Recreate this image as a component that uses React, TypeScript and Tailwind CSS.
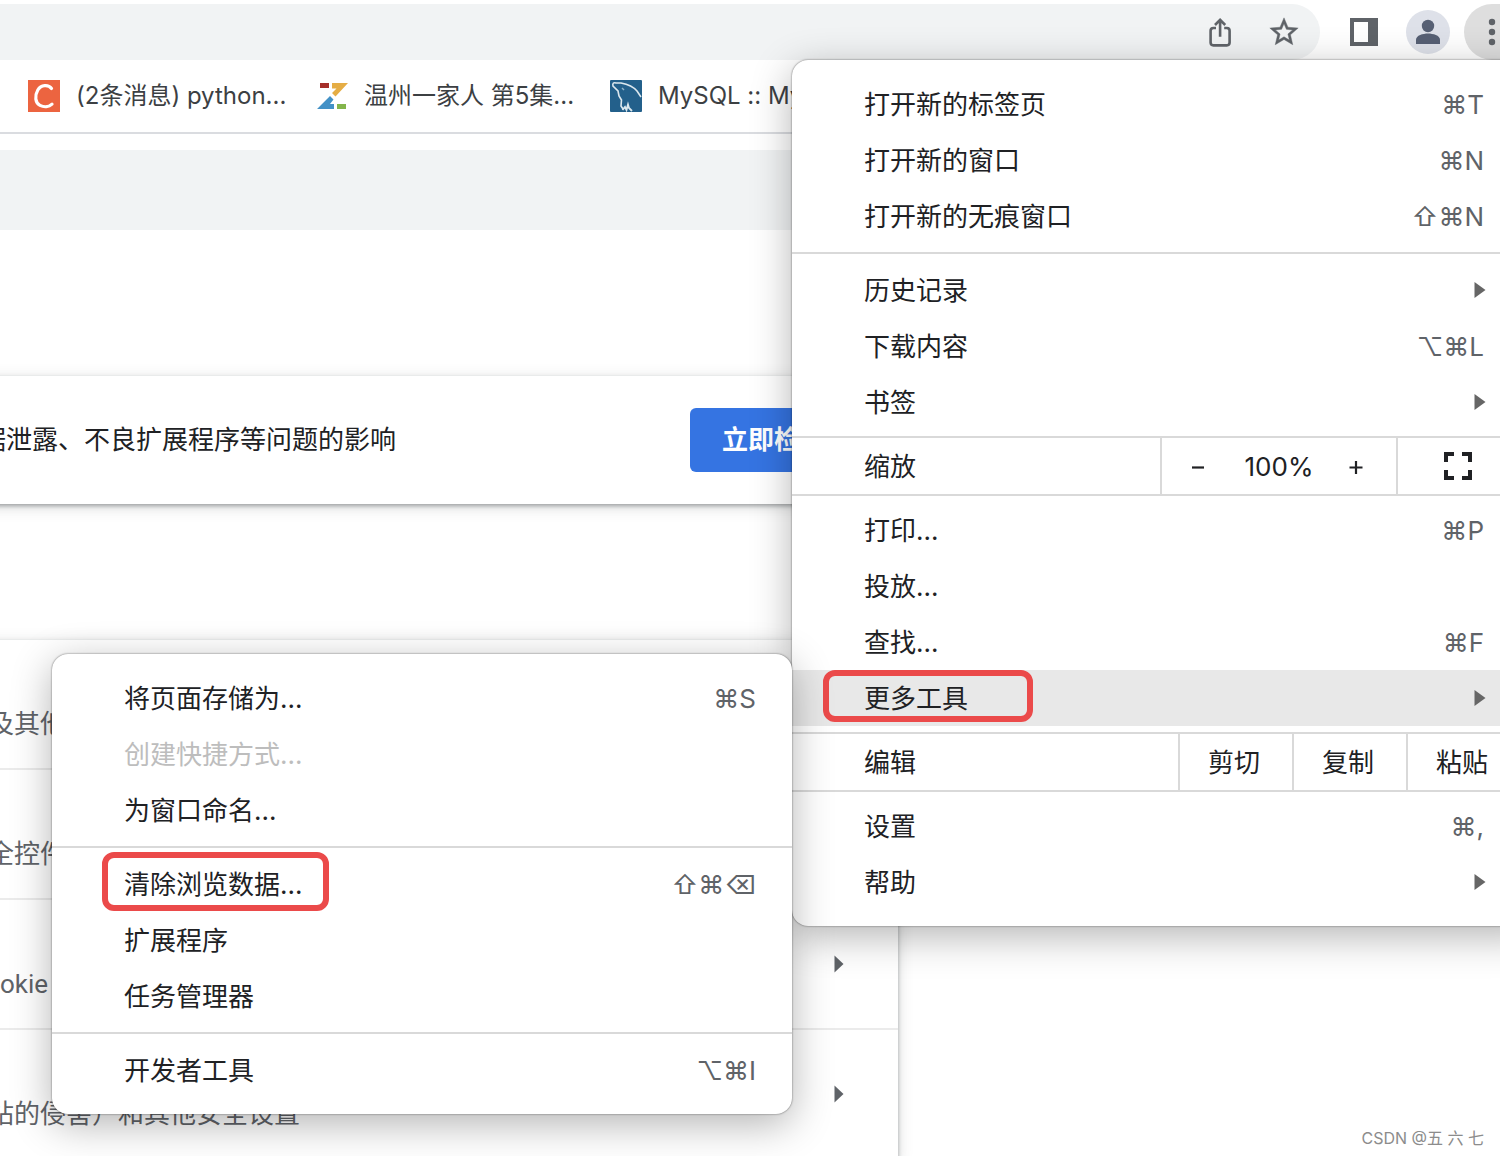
import type { ReactNode } from "react";

type MenuItemProps = {
  label: string;
  shortcut?: string;
  arrow?: boolean;
  disabled?: boolean;
  active?: boolean;
  inner?: boolean;
};

const Arrow = () => (
  <svg viewBox="0 0 12 16" className="w-3 h-4 shrink-0" aria-hidden="true">
    <path d="M0.5 0 L11.5 8 L0.5 16 Z" fill="#666666" />
  </svg>
);

const MenuItem = ({ label, shortcut, arrow, disabled, active, inner }: MenuItemProps) => {
  return (
    <button
      type="button"
      disabled={disabled}
      className={`flex w-full h-14 items-center justify-between pl-18 text-left ${inner ? "pr-9" : arrow ? "pr-[54px]" : "pr-14"} ${active ? "bg-[#e8e8e8]" : ""} ${disabled ? "text-[#bdbdbd]" : "text-[#202124]"}`}
    >
      <span className="pt-[2px]">{label}</span>
      {shortcut && (
        <span className="pt-[2px] text-[#5f6368] font-[Inter,'DejaVu_Sans',sans-serif]">{shortcut}</span>
      )}
      {arrow && <Arrow />}
    </button>
  );
};

const Separator = () => <hr className="my-2 border-0 h-[2px] bg-[#d9d9d9]" />;

const Menu = ({ children, className }: { children: ReactNode; className: string }) => (
  <div
    className={`bg-white py-4 text-[26px] leading-10 shadow-[0_0_2px_rgba(0,0,0,0.6),0_10px_40px_rgba(0,0,0,0.3)] ${className}`}
  >
    {children}
  </div>
);

const Toolbar = () => (
  <header className="flex h-15 pt-1 overflow-hidden">
    <div className="flex flex-1 items-center justify-end gap-8 bg-[#f1f3f4] rounded-r-full pr-5">
      <button type="button" aria-label="分享">
        <svg viewBox="0 0 32 32" className="w-8 h-8" fill="none" stroke="#5f6368" strokeWidth="2.6">
          <path d="M12 12 H9.4 Q6.6 12 6.6 14.8 V26.6 Q6.6 29.4 9.4 29.4 H22.8 Q25.6 29.4 25.6 26.6 V14.8 Q25.6 12 22.8 12 H20.2" />
          <path d="M16.1 20.7 V4.5 M11 9 L16.1 3.9 L21.2 9" />
        </svg>
      </button>
      <button type="button" aria-label="添加书签">
        <svg viewBox="0.7 0.7 22.6 22.6" className="w-8 h-8" fill="#5f6368" stroke="#5f6368" strokeWidth="0.3">
          <path d="M22 9.24l-7.19-.62L12 2 9.19 8.63 2 9.24l5.46 4.73L5.82 21 12 17.27 18.18 21l-1.63-7.03L22 9.24zM12 15.4l-3.76 2.27 1-4.28-3.32-2.88 4.38-.38L12 6.1l1.71 4.04 4.38.38-3.32 2.88 1 4.28L12 15.4z" />
        </svg>
      </button>
    </div>
    <div className="flex items-center pl-[30px]">
      <button type="button" aria-label="侧边栏">
        <svg viewBox="0 0 28 28" className="w-7 h-7">
          <rect width="28" height="28" fill="#5f6368" />
          <rect x="4" y="4" width="14" height="20" fill="#ffffff" />
        </svg>
      </button>
      <button type="button" aria-label="个人资料" className="ml-7 w-11 h-11 rounded-full bg-[#dee1e9]">
        <svg viewBox="0 0 44 44" className="w-11 h-11" fill="#576074">
          <circle cx="22" cy="16" r="6.2" />
          <path d="M10 34 V29.5 C10 25.4 17 23.4 22 23.4 S34 25.4 34 29.5 V34 Z" />
        </svg>
      </button>
      <button type="button" aria-label="更多" className="ml-[14px] w-9 h-14 rounded-l-full bg-[#dedede]">
        <svg viewBox="0 0 36 56" className="w-9 h-14" fill="#5f6368">
          <circle cx="28" cy="18" r="3.2" />
          <circle cx="28" cy="28" r="3.2" />
          <circle cx="28" cy="38" r="3.2" />
        </svg>
      </button>
    </div>
  </header>
);

const Bookmarks = () => (
  <nav className="flex h-[74px] items-center gap-8 pl-7 border-b-2 border-[#dadce0] text-2xl whitespace-nowrap text-[#3c4043] [font-feature-settings:'calt'_0]">
    <a href="#" className="flex w-64 items-center gap-4">
      <svg viewBox="0 0 32 32" className="w-8 h-8 shrink-0">
        <rect width="32" height="32" fill="#ec6440" />
        <path d="M23.5 8.5 C20.5 4.3 13 4.6 9.8 10 C6.4 16 7.2 23 12 25.4 C16 27.3 21 27 24 24.2" fill="none" stroke="#ffffff" strokeWidth="3.2" strokeLinecap="round" />
      </svg>
      <span>(2条消息) python...</span>
    </a>
    <a href="#" className="flex w-[262px] items-center gap-4">
      <svg viewBox="0 0 32 32" className="w-8 h-8 shrink-0">
        <rect x="4" y="3" width="9" height="5" fill="#a52f2a" />
        <path d="M16 3 H32 L19.5 16.5 L16 13 L20.5 8.5 H16 Z" fill="#e5ad45" />
        <path d="M1 29 L14 16 L17.5 19.5 L14 24 H18 V29 Z" fill="#4391c6" />
        <rect x="21" y="24" width="9" height="5" fill="#83b54b" />
      </svg>
      <span>温州一家人 第5集...</span>
    </a>
    <a href="#" className="flex items-center gap-4">
      <svg viewBox="0 0 32 32" className="w-8 h-8 shrink-0">
        <rect width="32" height="32" rx="1" fill="#23608b" />
        <path d="M13 29 L11 26 L11.5 20 L9 16 L8 11 L3 6 Q2 2 6 3 H11 Q22 5 27 11 L31 17" fill="none" stroke="#dbe7ee" strokeWidth="1.6" />
        <path d="M12.5 30 L15 27 L16.5 30 L18 24.5 L19 28 L22 31" fill="none" stroke="#dbe7ee" strokeWidth="1.8" />
        <path d="M12 8 L14 10" stroke="#8fb3c9" strokeWidth="1.4" />
      </svg>
      <span>MySQL :: MySQL</span>
    </a>
  </nav>
);

const SettingsRow = ({ text, indent }: { text: string; indent: string }) => (
  <a href="#" className={`flex h-[130px] items-center justify-between border-b-2 border-[#ebebeb] pr-[54px] ${indent}`}>
    <span className="pt-10 text-[#5f6368] whitespace-nowrap">{text}</span>
    <svg viewBox="0 0 10 18" className="w-[10px] h-[18px]" fill="#5f6368">
      <path d="M0.5 0.5 L9.5 9 L0.5 17.5 Z" />
    </svg>
  </a>
);

const SettingsPage = () => (
  <main className="-ml-8 w-[930px] text-[26px] leading-10 font-[Roboto,'Noto_Sans_CJK_SC',sans-serif]">
    <section className="mt-[146px] flex h-32 items-center justify-between pl-3 pr-10 bg-white shadow-[0_2px_4px_rgba(60,64,67,0.4),0_3px_14px_rgba(60,64,67,0.2)]">
      <p className="text-[#202124]">据泄露、不良扩展程序等问题的影响</p>
      <button type="button" className="h-16 px-8 rounded-md bg-[#3574e2] text-white font-bold">立即检查</button>
    </section>
    <section className="mt-[136px] bg-white shadow-[0_2px_4px_rgba(60,64,67,0.4),0_3px_14px_rgba(60,64,67,0.2)]">
      <SettingsRow text="及其他" indent="pl-5" />
      <SettingsRow text="全控件" indent="pl-5" />
      <SettingsRow text="okie" indent="pl-8" />
      <SettingsRow text="站的侵害）和其他安全设置" indent="pl-5" />
    </section>
  </main>
);

const ToolsMenu = () => (
  <Menu className="absolute right-full -top-4 w-[740px] rounded-2xl">
    <MenuItem inner label="将页面存储为..." shortcut="⌘S" />
    <MenuItem inner label="创建快捷方式..." disabled />
    <MenuItem inner label="为窗口命名..." />
    <Separator />
    <div className="relative">
      <MenuItem inner label="清除浏览数据..." shortcut="⇧⌘⌫" />
      <div className="absolute left-[50px] -top-1 w-[227px] h-[59px] rounded-xl border-6 border-[#eb4a4a] pointer-events-none" />
    </div>
    <MenuItem inner label="扩展程序" />
    <MenuItem inner label="任务管理器" />
    <Separator />
    <MenuItem inner label="开发者工具" shortcut="⌥⌘I" />
  </Menu>
);

// The menu runs past the right edge of the window, hence the extra 40px.
const ChromeMenu = () => (
  <Menu className="absolute -right-10 top-15 w-[748px] rounded-2xl">
    <MenuItem label="打开新的标签页" shortcut="⌘T" />
    <MenuItem label="打开新的窗口" shortcut="⌘N" />
    <MenuItem label="打开新的无痕窗口" shortcut="⇧⌘N" />
    <Separator />
    <MenuItem label="历史记录" arrow />
    <MenuItem label="下载内容" shortcut="⌥⌘L" />
    <MenuItem label="书签" arrow />

    <div className="my-[6px] flex h-15 items-stretch border-y-2 border-[#d9d9d9] text-[#202124]">
      <span className="flex flex-1 items-center pl-18 pt-[2px]">缩放</span>
      <div className="flex w-[238px] items-center border-x-2 border-[#d9d9d9] pl-7 pr-8">
        <button type="button" aria-label="缩小" className="w-4 h-10">
          <svg viewBox="0 0 16 16" className="w-4 h-4" stroke="#202124" strokeWidth="2.2">
            <path d="M2 9.5 H14" />
          </svg>
        </button>
        <span className="flex-1 pl-1 pt-[2px] text-center">100%</span>
        <button type="button" aria-label="放大" className="w-4 h-10">
          <svg viewBox="0 0 16 16" className="w-4 h-4" stroke="#202124" strokeWidth="2.2">
            <path d="M1.5 9.5 H14.5 M8 3 V16" />
          </svg>
        </button>
      </div>
      <button type="button" aria-label="全屏" className="w-[142px] pl-[46px]">
        <svg viewBox="0 0 28 28" className="w-7 h-7" fill="none" stroke="#202124" strokeWidth="4">
          <path d="M2 10 V2 H10 M18 2 H26 V10 M26 18 V26 H18 M10 26 H2 V18" />
        </svg>
      </button>
    </div>

    <MenuItem label="打印..." shortcut="⌘P" />
    <MenuItem label="投放..." />
    <MenuItem label="查找..." shortcut="⌘F" />
    <div className="relative">
      <MenuItem label="更多工具" arrow active />
      <div className="absolute left-[31px] top-0 w-[210px] h-[52px] rounded-xl border-6 border-[#eb4a4a] pointer-events-none" />
      <ToolsMenu />
    </div>

    <div className="my-[6px] flex h-15 items-stretch border-y-2 border-[#d9d9d9] text-left text-[#202124]">
      <span className="flex flex-1 items-center pl-18 pt-[2px]">编辑</span>
      <button type="button" className="w-[114px] border-l-2 border-[#d9d9d9] pl-7 pt-[2px] text-left">剪切</button>
      <button type="button" className="w-[114px] border-l-2 border-[#d9d9d9] pl-7 pt-[2px] text-left">复制</button>
      <button type="button" className="w-[134px] border-l-2 border-[#d9d9d9] pl-7 pt-[2px] text-left">粘贴</button>
    </div>

    <MenuItem label="设置" shortcut="⌘," />
    <MenuItem label="帮助" arrow />
  </Menu>
);

const App = () => {
  return (
    <div className="relative h-screen overflow-hidden bg-white font-[Inter,'Noto_Sans_CJK_SC',sans-serif]">
      <Toolbar />
      <Bookmarks />
      <div className="mt-4 h-20 bg-[#f1f3f4]" />
      <SettingsPage />
      <ChromeMenu />
      <p className="absolute right-4 bottom-1 text-base leading-7 text-[#8c8c8c]">CSDN @五 六 七</p>
    </div>
  );
};

export default App;
